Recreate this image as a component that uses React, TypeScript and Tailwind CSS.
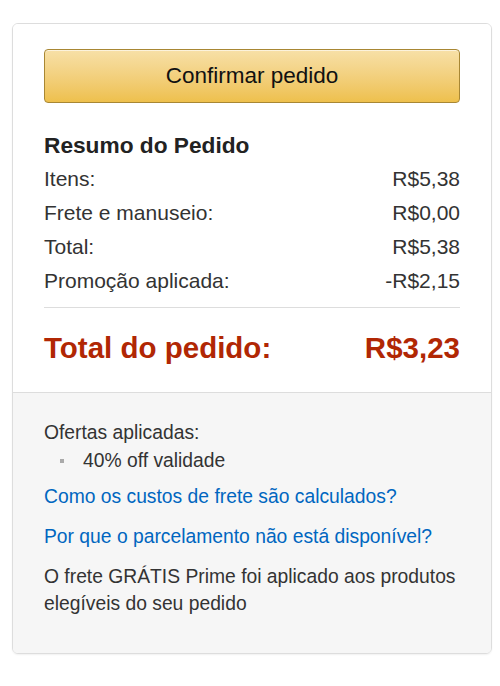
import React from "react";

const rows = [
  { label: "Itens:", value: "R$5,38" },
  { label: "Frete e manuseio:", value: "R$0,00" },
  { label: "Total:", value: "R$5,38" },
  { label: "Promoção aplicada:", value: "-R$2,15" },
];

export default function App() {
  return (
    <div
      className="min-h-[686px] w-[500px] bg-white pt-[23px] pl-[12px]"
      style={{ fontFamily: '"Liberation Sans", Arial, sans-serif' }}
    >
      <div className="w-[480px] rounded-[6px] border border-[#dddddd] shadow-[0_1px_2px_rgba(0,0,0,0.06)] overflow-hidden">
        {/* Top: button + summary */}
        <div className="px-[31px] pt-[25px] pb-[24px] bg-white">
          <button
            type="button"
            className="w-full h-[54px] rounded-[4px] border border-[#a88734] bg-gradient-to-b from-[#f7e0a7] to-[#eec04c] text-[22.5px] text-[#111111] shadow-[inset_0_1px_0_rgba(255,255,255,0.6)]"
          >
            Confirmar pedido
          </button>

          <h2 className="mt-[25px] h-[34px] leading-[34px] text-[22.7px] font-bold text-[#222222]">
            Resumo do Pedido
          </h2>

          <div className="flex flex-col">
            {rows.map((r) => (
              <div
                key={r.label}
                className="flex items-center justify-between h-[34px] text-[21px] text-[#333333]"
              >
                <span>{r.label}</span>
                <span>{r.value}</span>
              </div>
            ))}
          </div>

          <div className="mt-[9px] border-t border-[#dddddd]" />

          <div className="mt-[20px] flex items-center justify-between h-[40px] text-[29.5px] font-bold text-[#b12704]">
            <span>Total do pedido:</span>
            <span>R$3,23</span>
          </div>
        </div>

        {/* Bottom: offers and info */}
        <div className="border-t border-[#dddddd] bg-[#f6f6f6] px-[31px] pt-[26px] pb-[36px] text-[19.3px] text-[#333333]">
          <div className="leading-[28px]">Ofertas aplicadas:</div>
          <ul className="leading-[28px]">
            <li className="flex items-center">
              <span className="ml-[16px] mr-[19px] h-[4px] w-[4px] bg-[#aaaaaa]" />
              <span>40% off validade</span>
            </li>
          </ul>
          <a className="mt-[8px] block leading-[28px] text-[#0066c0]" href="#">
            Como os custos de frete são calculados?
          </a>
          <a className="mt-[12px] block leading-[28px] text-[#0066c0]" href="#">
            Por que o parcelamento não está disponível?
          </a>
          <p className="mt-[12px] leading-[27px]">
            O frete GRÁTIS Prime foi aplicado aos produtos elegíveis do seu pedido
          </p>
        </div>
      </div>
    </div>
  );
}
